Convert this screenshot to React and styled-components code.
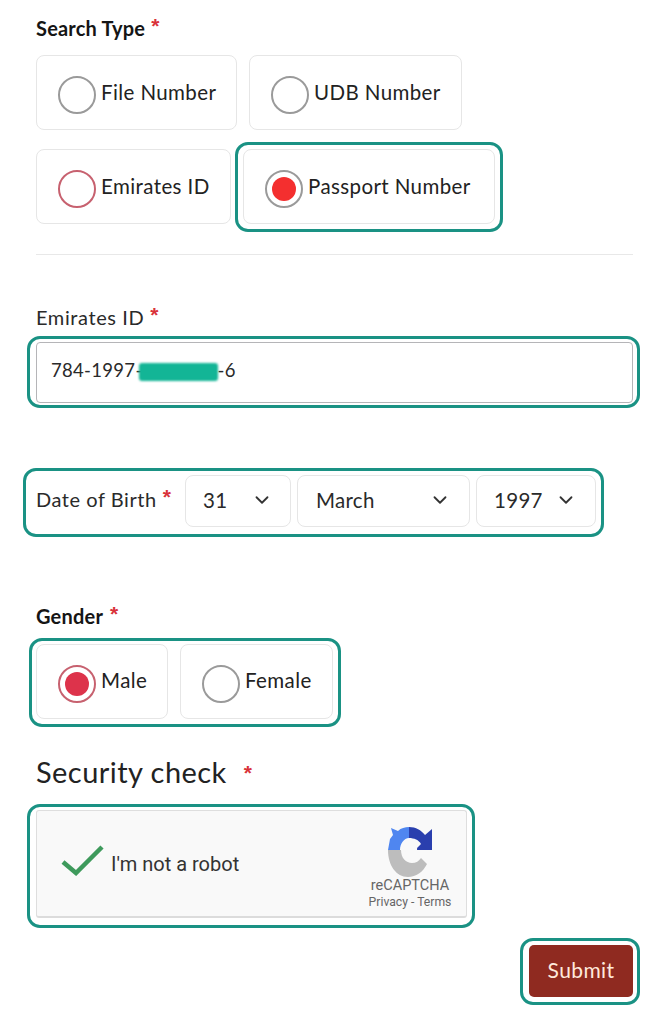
import React from 'react';
import styled, { createGlobalStyle } from 'styled-components';
import { ChevronDown } from 'lucide-react';

const Global = createGlobalStyle`
  html, body { margin: 0; background: #fff; }
  body { font-family: Lato, "Noto Sans", sans-serif; color: #222; }
  * { box-sizing: border-box; }
`;

const Page = styled.main`
  width: 652px;
  height: 1024px;
  overflow: hidden;
  padding: 16px 12px 0 36px;
`;

const Label = styled.div`
  height: 24px;
  line-height: 24px;
  font-size: 20px;
  font-weight: ${p => (p.$bold ? 700 : 400)};
  margin-top: ${p => p.$mt || 0}px;
  color: ${p => (p.$bold ? '#151515' : '#2a2a2a')};
  letter-spacing: ${p => (p.$bold ? 0.2 : 0.6)}px;
  white-space: nowrap;
`;

const Star = styled.span`
  font-family: "Liberation Sans", sans-serif;
  font-weight: 700;
  color: #d9323a;
  font-size: 21px;
  line-height: 0;
  letter-spacing: 0;
  margin-left: ${p => p.$ml || 6}px;
  position: relative;
  top: -3px;
`;

const Row = styled.div`
  display: flex;
  gap: ${p => p.$gap ?? 12}px;
  margin-top: ${p => p.$mt || 0}px;
  align-items: flex-start;
`;

const Highlight = styled.div`
  display: flex;
  align-items: center;
  gap: ${p => p.$gap || 0}px;
  width: ${p => p.$w}px;
  height: ${p => p.$h}px;
  margin-top: ${p => p.$mt || 0}px;
  margin-left: ${p => p.$ml || 0}px;
  padding: ${p => p.$pad};
  border: 3px solid #1a9284;
  border-radius: 13px;
  background: #fff;
  flex: none;
`;

const Card = styled.label`
  display: flex;
  align-items: center;
  gap: 5px;
  width: ${p => p.$w}px;
  height: 75px;
  margin-top: ${p => p.$mt || 0}px;
  padding-left: 21px;
  border: 1px solid #e6e6e6;
  border-radius: 8px;
  background: #fff;
  flex: none;
`;

const Radio = styled.span`
  width: 38px;
  height: 38px;
  margin-top: 5px;
  border-radius: 50%;
  border: 2px solid ${p => p.$ring || '#9a9a9a'};
  display: flex;
  align-items: center;
  justify-content: center;
  flex: none;
`;

const Dot = styled.span`
  width: 24px;
  height: 24px;
  border-radius: 50%;
  background: ${p => p.$c};
`;

const CardText = styled.span`
  font-size: 20.5px;
  color: #222;
  white-space: nowrap;
  letter-spacing: 0.4px;
  margin-bottom: 2px;
`;

const Divider = styled.hr`
  margin: 22px 7px 0 0;
  border: 0;
  border-top: 1px solid #e8e8e8;
`;

const Input = styled.div`
  flex: 1;
  height: 61px;
  display: flex;
  align-items: center;
  padding-left: 14px;
  padding-bottom: 4px;
  border: 1px solid #b5b5b8;
  border-radius: 4px;
  font-size: 18.5px;
  color: #2a2a2a;
  letter-spacing: 0.3px;
`;

const Redact = styled.span`
  display: inline-block;
  width: 79px;
  height: 18px;
  margin: 4px 0 0 -4px;
  background: #13b596;
  border-radius: 3px;
  filter: blur(1.2px);
`;

const DateLabel = styled.span`
  font-size: 20px;
  color: #2a2a2a;
  white-space: nowrap;
  width: 143px;
  flex: none;
  letter-spacing: 0.55px;
  margin-bottom: 4px;
`;

const Select = styled.div`
  display: flex;
  align-items: center;
  justify-content: space-between;
  width: ${p => p.$w}px;
  height: 52px;
  padding: 0 ${p => p.$pr}px 3px ${p => p.$pl}px;
  border: 1px solid #e6e6e6;
  border-radius: 8px;
  font-size: 20.5px;
  color: #2a2a2a;
  letter-spacing: 0.3px;
  flex: none;
`;

const SectionTitle = styled.div`
  height: 36px;
  line-height: 36px;
  margin-top: 27px;
  font-size: 29px;
  color: #222;
  letter-spacing: 0.45px;
`;

const Captcha = styled.div`
  display: flex;
  align-items: center;
  width: 431px;
  height: 108px;
  padding: 0 15px 0 24px;
  background: #f9f9f9;
  border: 1px solid #dedede;
  border-bottom: 2px solid #dcdcdc;
  border-radius: 3px;
`;

const CheckMark = styled.svg`
  flex: none;
  margin-top: -8px;
`;

const RobotText = styled.span`
  margin-left: 6px;
  font-family: Roboto, sans-serif;
  font-size: 20px;
  color: #333;
  flex: 1;
`;

const Brand = styled.div`
  display: flex;
  flex-direction: column;
  align-items: center;
  width: 82px;
  margin-top: 10px;
  color: #666;
  font-family: Roboto, sans-serif;
`;

const BrandName = styled.span`
  font-size: 14.5px;
  line-height: 17px;
  white-space: nowrap;
`;

const BrandLinks = styled.span`
  font-size: 12.2px;
  line-height: 17px;
  white-space: nowrap;
`;

const SubmitRow = styled.div`
  display: flex;
  justify-content: flex-end;
  margin-top: 10px;
`;

const Submit = styled.button`
  width: 104px;
  height: 52px;
  padding: 0 0 3px;
  border: 0;
  border-radius: 5px;
  background: #8f2a20;
  color: #ffe9dc;
  font-family: inherit;
  font-size: 21px;
  letter-spacing: 0.4px;
`;

const Chevron = styled(ChevronDown)`
  flex: none;
  color: #333;
`;

function Logo() {
  return (
    <svg width="44" height="50" viewBox="0 0 44 50">
      <path d="M21 0 C28 0 33 3 37 8 L44 2 V23 H27 L33 17 C31 13 26 11 21 11 Z" fill="#2a3fae" />
      <path d="M21 0 C17 0 13 1 10 4 L3 1 L5 8 L2 12 L0 23 H12 C12 17 16 11 21 11 Z" fill="#4f86f0" />
      <path d="M0 23 H13 C13 31 18 36 24 36 C28 36 31 34 33 31 L39 37 C35 45 28 50 20 50 C8 50 0 38 0 23 Z" fill="#bdbdbd" />
      <path d="M13 22 C15 18 19 14 21 16 L24 19 C27 19 30 20 29 23 L25 26 C24 29 21 31 19 30 L20 26 Z" fill="#f9f9f9" />
    </svg>
  );
}

export default function App() {
  return (
    <Page>
      <Global />
      <Label $bold>Search Type<Star>*</Star></Label>
      <Row $mt={15}>
        <Card $w={201}><Radio /><CardText>File Number</CardText></Card>
        <Card $w={213}><Radio /><CardText>UDB Number</CardText></Card>
      </Row>
      <Row $mt={12} $gap={4}>
        <Card $w={195} $mt={7}><Radio $ring="#c7616f" /><CardText>Emirates ID</CardText></Card>
        <Highlight $w={268} $h={90} $pad="0 4px 1px 5px">
          <Card $w={252}>
            <Radio><Dot $c="#f42f2f" /></Radio>
            <CardText>Passport Number</CardText>
          </Card>
        </Highlight>
      </Row>
      <Divider />
      <Label $mt={50}>Emirates ID<Star>*</Star></Label>
      <Highlight $w={613} $h={72} $mt={7} $ml={-9} $pad="0 4px 0 6px">
        <Input>784-1997-<Redact />-6</Input>
      </Highlight>
      <Highlight $w={581} $h={69} $mt={60} $ml={-13} $gap={6} $pad="0 5px 3px 10px">
        <DateLabel>Date of Birth<Star>*</Star></DateLabel>
        <Select $w={106} $pl={17} $pr={17}>31<Chevron size={22} /></Select>
        <Select $w={173} $pl={18} $pr={18}>March<Chevron size={22} /></Select>
        <Select $w={120} $pl={17} $pr={18}>1997<Chevron size={22} /></Select>
      </Highlight>
      <Label $bold $mt={67}>Gender<Star $ml={7}>*</Star></Label>
      <Highlight $w={312} $h={89} $mt={10} $ml={-7} $gap={12} $pad="0 5px 3px 4px">
        <Card $w={132}>
          <Radio $ring="#c7616f"><Dot $c="#dd334b" /></Radio>
          <CardText>Male</CardText>
        </Card>
        <Card $w={153}><Radio /><CardText>Female</CardText></Card>
      </Highlight>
      <SectionTitle>Security check<Star $ml={17}>*</Star></SectionTitle>
      <Highlight $w={448} $h={124} $mt={14} $ml={-9} $pad="0 5px 4px 6px">
        <Captcha>
          <CheckMark width="44" height="32" viewBox="0 0 44 32">
            <path d="M2 18 L15 29 L41 3" fill="none" stroke="#3e9a5c" strokeWidth="4.5" />
          </CheckMark>
          <RobotText>I'm not a robot</RobotText>
          <Brand>
            <Logo />
            <BrandName>reCAPTCHA</BrandName>
            <BrandLinks>Privacy - Terms</BrandLinks>
          </Brand>
        </Captcha>
      </Highlight>
      <SubmitRow>
        <Highlight $w={120} $h={67} $pad="0 4px 1px 6px">
          <Submit>Submit</Submit>
        </Highlight>
      </SubmitRow>
    </Page>
  );
}
